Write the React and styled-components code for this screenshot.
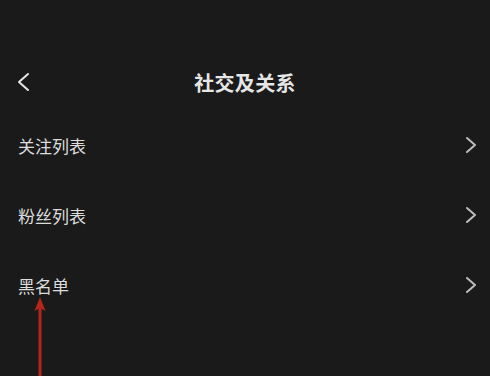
import React from "react";
import styled, { createGlobalStyle } from "styled-components";

const Global = createGlobalStyle`
  html, body { margin: 0; padding: 0; background: #1a1a1a; }
  body { font-family: "Noto Sans CJK SC", "Noto Sans", sans-serif; }
`;

const Page = styled.div`
  position: relative;
  width: 490px;
  height: 376px;
  background: #1a1a1a;
  overflow: hidden;
  display: flex;
  flex-direction: column;
`;

const Header = styled.div`
  margin-top: 54px;
  height: 56px;
  display: grid;
  grid-template-columns: 60px 1fr 60px;
  align-items: center;
`;

const BackButton = styled.div`
  display: flex;
  align-items: center;
  padding-left: 17px;
  height: 100%;
`;

const Title = styled.div`
  text-align: center;
  color: #e6e6e6;
  font-size: 20px;
  font-weight: 700;
  letter-spacing: 0.3px;
`;

const List = styled.div`
  display: flex;
  flex-direction: column;
`;

const Row = styled.div`
  height: 70px;
  display: flex;
  align-items: center;
  justify-content: space-between;
  padding: 0 12px 0 18px;
`;

const Label = styled.span`
  color: #dcdcdc;
  font-size: 17px;
  font-weight: 400;
`;

const Arrow = styled.svg`
  position: absolute;
  left: 30px;
  top: 296px;
`;

const Chevron = ({ dir = "right" }) => (
  <svg width="14" height="20" viewBox="0 0 14 20">
    {dir === "right" ? (
      <path d="M3 3 L11 10 L3 17" fill="none" stroke="#bdbdbd" strokeWidth="2" strokeLinecap="round" strokeLinejoin="round" />
    ) : (
      <path d="M11 2 L2 10 L11 18" fill="none" stroke="#e6e6e6" strokeWidth="2" strokeLinecap="round" strokeLinejoin="round" />
    )}
  </svg>
);

const items = ["关注列表", "粉丝列表", "黑名单"];

export default function App() {
  return (
    <>
      <Global />
      <Page>
        <Header>
          <BackButton>
            <Chevron dir="left" />
          </BackButton>
          <Title>社交及关系</Title>
          <div />
        </Header>
        <List>
          {items.map((t) => (
            <Row key={t}>
              <Label>{t}</Label>
              <Chevron />
            </Row>
          ))}
        </List>
        <Arrow width="20" height="82" viewBox="0 0 20 82">
          <line x1="10" y1="10" x2="10" y2="82" stroke="#b3261a" strokeWidth="3" />
          <path d="M10 1 L4.5 15 L10 12 L15.5 15 Z" fill="#b3261a" />
        </Arrow>
      </Page>
    </>
  );
}
